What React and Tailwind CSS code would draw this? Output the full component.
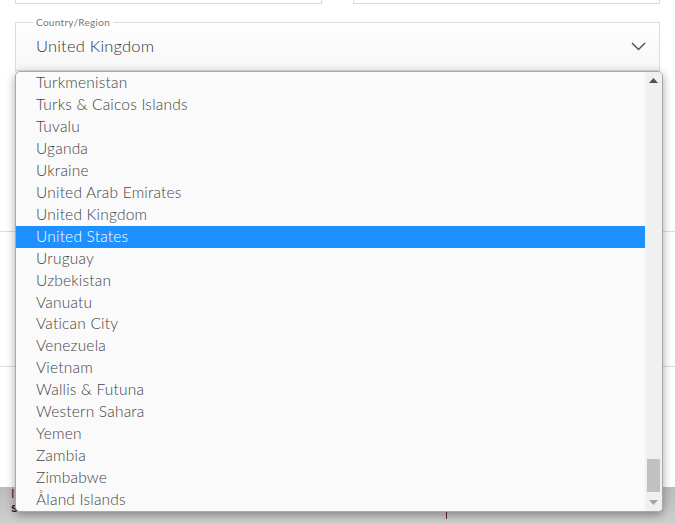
import React from "react";

const items = [
  "Turkmenistan",
  "Turks & Caicos Islands",
  "Tuvalu",
  "Uganda",
  "Ukraine",
  "United Arab Emirates",
  "United Kingdom",
  "United States",
  "Uruguay",
  "Uzbekistan",
  "Vanuatu",
  "Vatican City",
  "Venezuela",
  "Vietnam",
  "Wallis & Futuna",
  "Western Sahara",
  "Yemen",
  "Zambia",
  "Zimbabwe",
  "Åland Islands",
];

export default function App() {
  return (
    <div className="relative w-[675px] h-[524px] overflow-hidden bg-white font-['Lato',sans-serif]">
      <div className="flex flex-col h-full">
        <div className="flex gap-[31px] px-[15px] h-[4px]">
          <div className="w-[309px] h-[4px] border-x border-b border-[#dcdcdc]" />
          <div className="w-[309px] h-[4px] border-x border-b border-[#dcdcdc]" />
        </div>
        <div className="relative mt-[18px] mx-[15px] h-[49px] border border-[#dcdcdc] bg-gradient-to-b from-white to-[#f6f6f6] flex items-center pl-[20px] pr-[13px]">
          <span className="absolute -top-[7px] left-[17px] px-[3px] bg-white text-[10px] leading-[12px] text-[#777] tracking-[0.3px]">
            Country/Region
          </span>
          <span className="flex-1 text-[16.5px] font-light text-[#333] tracking-[0.2px]">United Kingdom</span>
          <svg width="15" height="9" viewBox="0 0 15 9">
            <path d="M1 1 L7.5 7.5 L14 1" fill="none" stroke="#555" strokeWidth="1.5" />
          </svg>
        </div>
        <div className="mt-[160px] border-t border-[#dcdcdc] h-[135px]" />
        <div className="border-t border-[#dcdcdc] h-[121px]" />
        <div className="flex-1 bg-gradient-to-b from-[#bcbcbc] to-[#cfcfcf] relative">
          <span className="absolute left-[11px] top-[0px] text-[12px] leading-[14px] text-[#3a1b3a] font-['Liberation_Sans']">I</span>
          <span className="absolute left-[11px] top-[14px] text-[12px] leading-[14px] text-[#222] font-['Liberation_Sans'] font-bold">s</span>
          <span className="absolute left-[446px] top-[24px] w-[1px] h-[8px] bg-[#5a2a2a]" />
        </div>
      </div>

      <div className="absolute left-[15px] top-[71px] w-[648px] h-[441px] bg-[#fafafa] border border-[#a8a8a8] rounded-[5px] shadow-[0_3px_10px_rgba(0,0,0,0.35)] flex overflow-hidden">
        <div className="flex-1 flex flex-col">
          {items.map((c) => (
            <div
              key={c}
              className={
                c === "United States"
                  ? "h-[22px] leading-[21px] pl-[20px] text-[15.5px] font-light tracking-[0.2px] bg-[#1e90ff] text-white"
                  : "h-[22px] leading-[21px] pl-[20px] text-[15.5px] font-light tracking-[0.2px] text-[#444]"
              }
            >
              {c}
            </div>
          ))}
        </div>
        <div className="w-[17px] bg-[#f0f0f0] flex flex-col items-center">
          <svg width="9" height="5" viewBox="0 0 9 5" className="mt-[6px]">
            <path d="M0 5 L4.5 0 L9 5 Z" fill="#505050" />
          </svg>
          <div className="flex-1" />
          <div className="w-[13px] h-[33px] bg-[#c1c1c1] mb-[8px]" />
          <svg width="9" height="5" viewBox="0 0 9 5" className="mb-[6px]">
            <path d="M0 0 L9 0 L4.5 5 Z" fill="#a3a3a3" />
          </svg>
        </div>
      </div>
    </div>
  );
}
